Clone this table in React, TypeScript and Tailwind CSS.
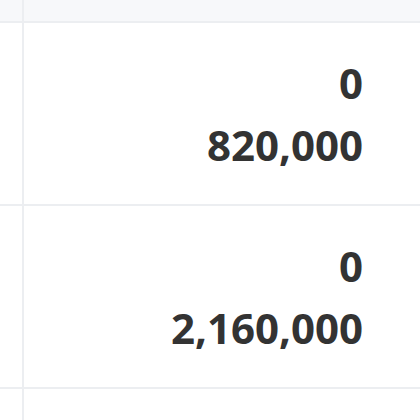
import React from "react";

const rows = [
  ["0", "820,000"],
  ["0", "2,160,000"],
];

export default function App() {
  return (
    <div
      className="w-[420px] h-[420px] overflow-hidden bg-white"
      style={{ fontFamily: '"Open Sans", "Noto Sans", sans-serif' }}
    >
      <div className="flex h-[23px] bg-[#f7f8fa] border-b-2 border-[#eceef1]">
        <div className="w-[24px] border-r-2 border-[#eceef1]" />
        <div className="flex-1" />
      </div>
      {rows.map((r, i) => (
        <div key={i} className="flex h-[183px] border-b-2 border-[#eceef1]">
          <div className="w-[24px] border-r-2 border-[#eceef1]" />
          <div className="flex-1 flex flex-col items-end justify-center pr-[57px] text-[42px] leading-[62px] font-bold text-[#333333]">
            <div>{r[0]}</div>
            <div>{r[1]}</div>
          </div>
        </div>
      ))}
      <div className="flex h-[40px]">
        <div className="w-[24px] border-r-2 border-[#eceef1]" />
        <div className="flex-1" />
      </div>
    </div>
  );
}
